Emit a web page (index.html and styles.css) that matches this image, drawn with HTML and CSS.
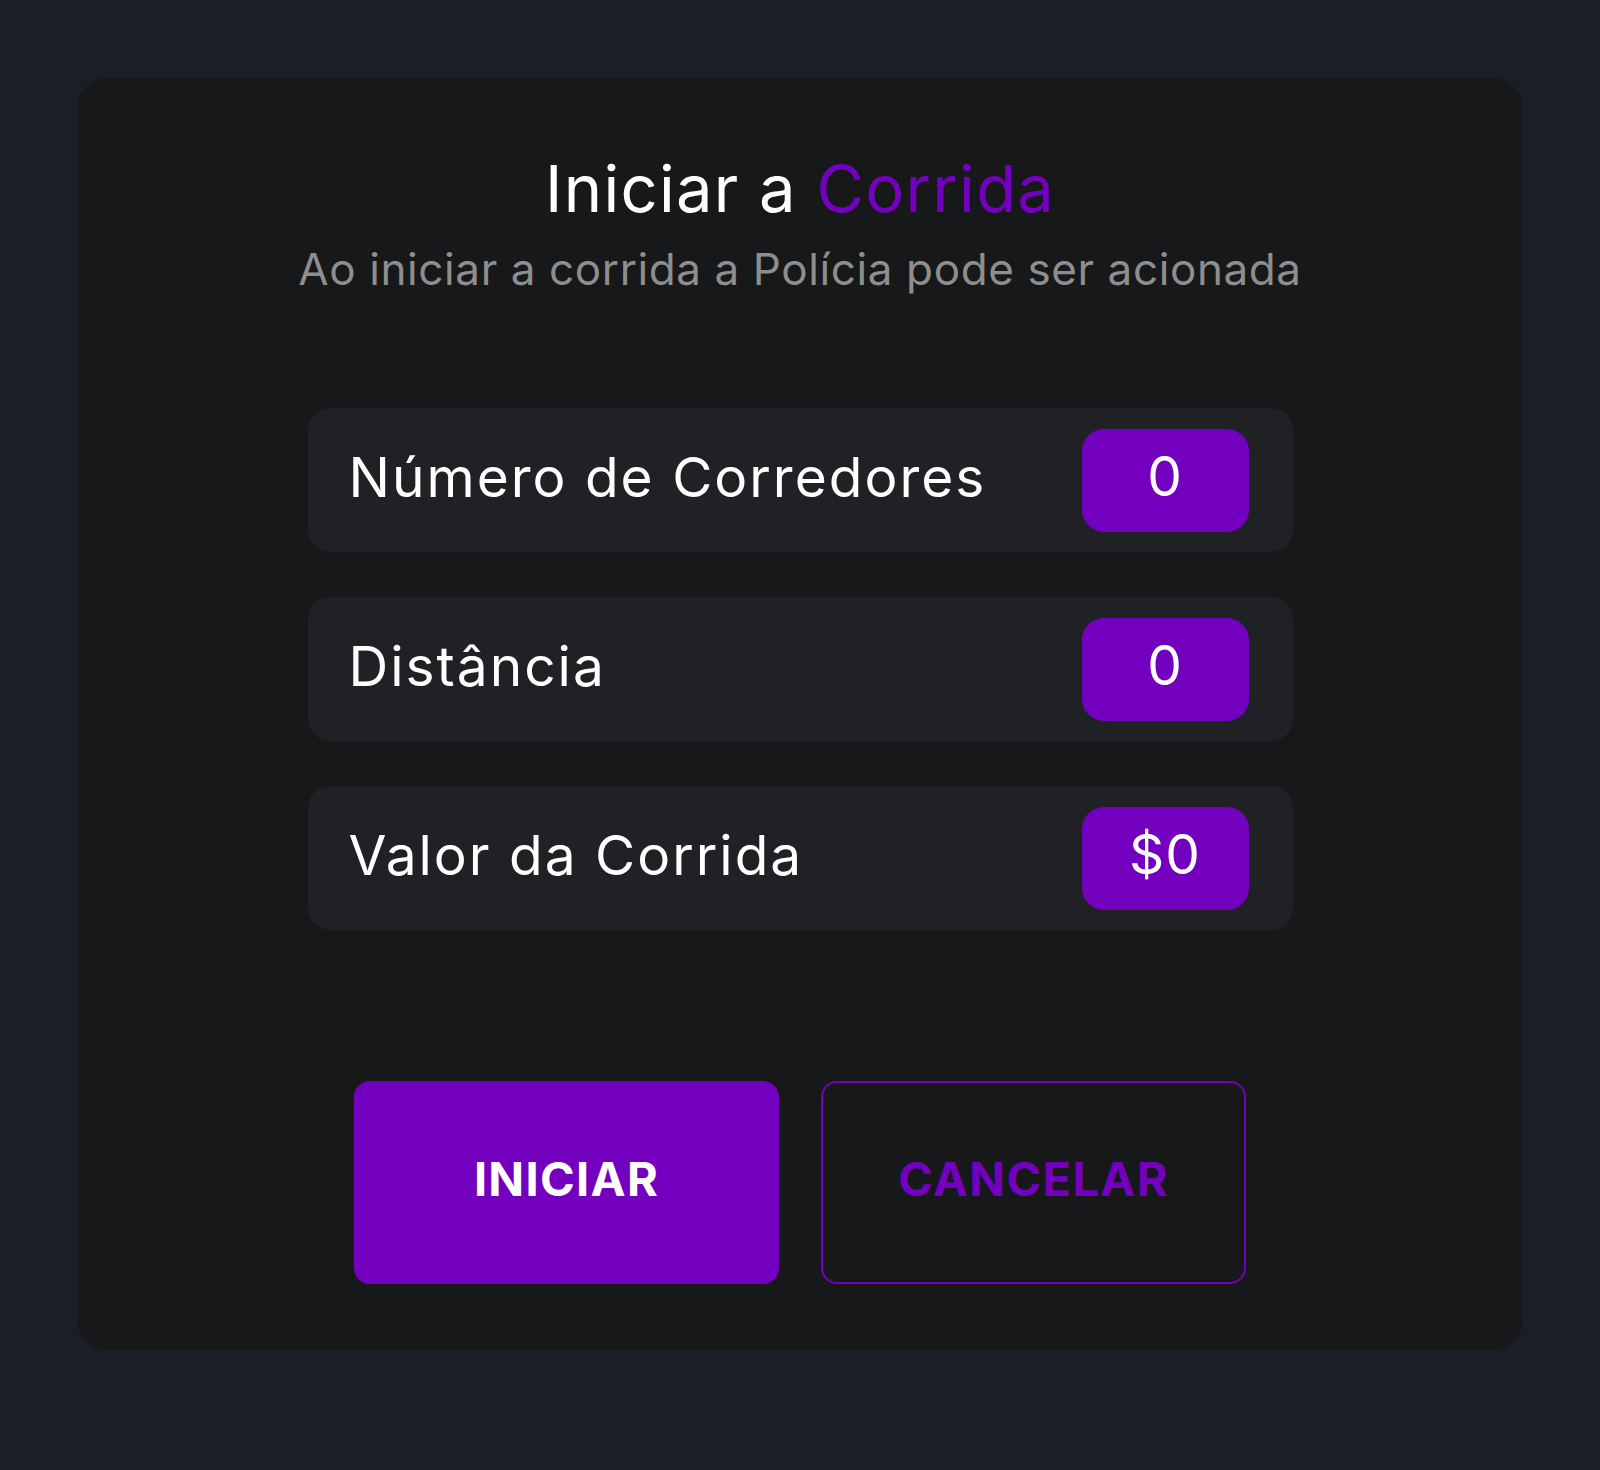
FILE: index.html
```html
<!DOCTYPE html>
<html lang="pt-BR">
<head>
<meta charset="utf-8">
<title>Iniciar a Corrida</title>
<link rel="stylesheet" href="styles.css">
</head>
<body>
<main class="card">
  <header class="head">
    <h1 class="title">Iniciar a <span class="accent">Corrida</span></h1>
    <p class="subtitle">Ao iniciar a corrida a Polícia pode ser acionada</p>
  </header>
  <section class="rows">
    <div class="row">
      <span class="label">Número de Corredores</span>
      <span class="value">0</span>
    </div>
    <div class="row">
      <span class="label">Distância</span>
      <span class="value">0</span>
    </div>
    <div class="row">
      <span class="label">Valor da Corrida</span>
      <span class="value">$0</span>
    </div>
  </section>
  <div class="actions">
    <button class="btn btn-primary" type="button">INICIAR</button>
    <button class="btn btn-outline" type="button">CANCELAR</button>
  </div>
</main>
</body>
</html>
```
FILE: styles.css
```css
* { box-sizing: border-box; }
html, body { margin: 0; padding: 0; }
body {
  background: #1b1e27;
  font-family: Inter, "Noto Sans", sans-serif;
  color: #ffffff;
  padding: 78px 77px 120px 77px;
  min-height: 1470px;
}
.card {
  width: 1446px;
  height: 1272px;
  background: #17181a;
  border-radius: 30px;
  padding-top: 72px;
  display: flex;
  flex-direction: column;
  align-items: center;
}
.head { text-align: center; }
.title {
  margin: 0;
  font-size: 65px;
  line-height: 78px;
  font-weight: 400;
  letter-spacing: 1.3px;
  color: #ffffff;
}
.accent { color: #7400bf; }
.subtitle {
  margin: 15px 0 0;
  font-size: 44px;
  line-height: 53px;
  font-weight: 400;
  letter-spacing: 0.6px;
  color: #8e8e8e;
}
.rows {
  margin-top: 112px;
  width: 985px;
  display: flex;
  flex-direction: column;
  gap: 45px;
}
.row {
  height: 144px;
  background: #202124;
  border-radius: 22px;
  display: flex;
  align-items: center;
  justify-content: space-between;
  padding: 0 44px 6px 41px;
}
.row .value { margin-top: 6px; }
.label {
  font-size: 55px;
  line-height: 66px;
  font-weight: 400;
  letter-spacing: 2px;
}
.value {
  width: 167px;
  height: 103px;
  background: #7400bf;
  border-radius: 22px;
  display: flex;
  align-items: center;
  justify-content: center;
  font-size: 55px;
  font-weight: 400;
  letter-spacing: 1px;
  padding-bottom: 9px;
}
.actions {
  margin-top: 151px;
  display: flex;
  gap: 42px;
}
.btn {
  width: 425px;
  height: 203px;
  border-radius: 16px;
  font-family: Inter, "Noto Sans", sans-serif;
  font-size: 47px;
  font-weight: 700;
  letter-spacing: 1.3px;
  padding: 0 0 9px;
  cursor: pointer;
}
.btn-primary {
  background: #7400bf;
  color: #ffffff;
  border: none;
}
.btn-outline {
  background: transparent;
  color: #7400bf;
  border: 2px solid #7400bf;
}
```
